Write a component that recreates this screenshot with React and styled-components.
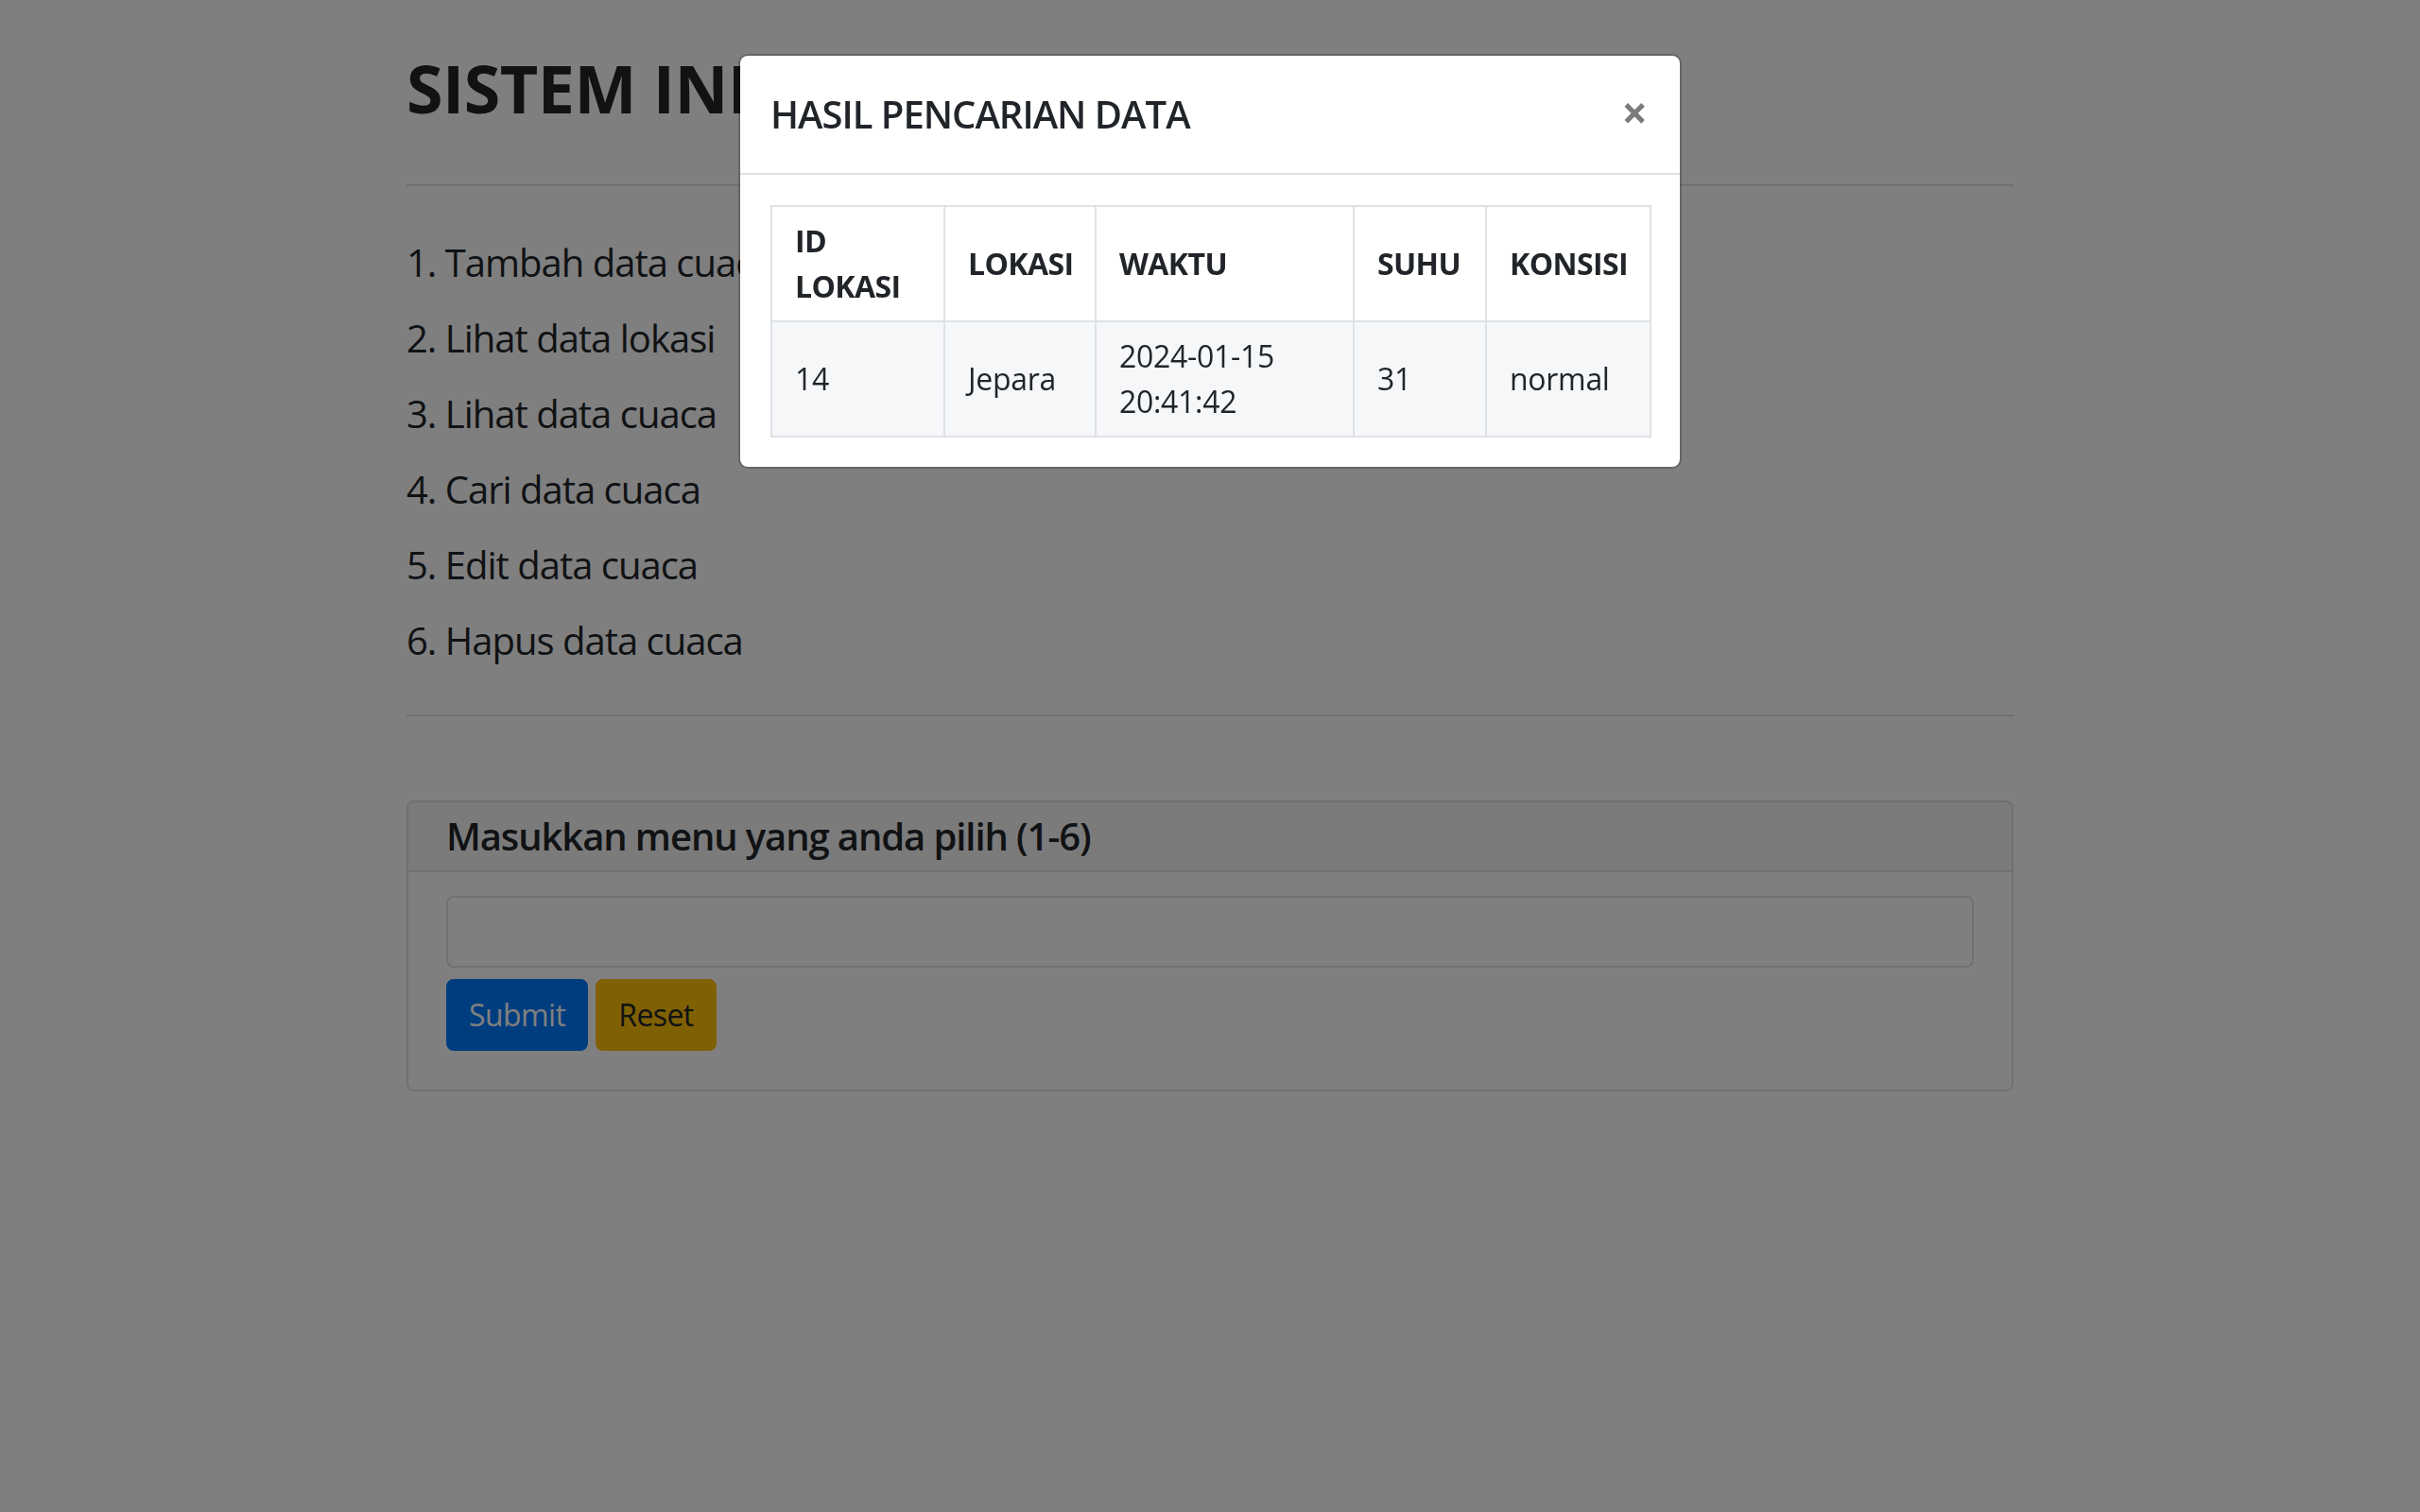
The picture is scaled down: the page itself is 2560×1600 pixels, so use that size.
import React from "react";
import styled, { createGlobalStyle } from "styled-components";

const GlobalStyle = createGlobalStyle`
  html, body {
    margin: 0;
    padding: 0;
    background: #fff;
  }
  body {
    font-family: "Open Sans", "Noto Sans", sans-serif;
    color: #212529;
  }
  * {
    box-sizing: border-box;
  }
`;

const Page = styled.div`
  width: 1700px;
  margin: 0 auto;
  padding-top: 51px;
  min-height: 1600px;
`;

const Title = styled.h1`
  margin: 0;
  font-size: 70px;
  line-height: 84px;
  font-weight: 700;
  letter-spacing: -0.5px;
  white-space: nowrap;
`;

const Rule = styled.hr`
  margin: ${(p) => p.$top}px 0 0;
  border: 0;
  border-top: 2px solid #e2e2e2;
`;

const Menu = styled.div`
  display: flex;
  flex-direction: column;
  gap: 20px;
  margin-top: 51px;
`;

const MenuItem = styled.div`
  font-size: 40px;
  line-height: 60px;
  letter-spacing: -1px;
`;

const Card = styled.div`
  margin-top: 89px;
  border: 2px solid #e0e0e0;
  border-radius: 8px;
  overflow: hidden;
`;

const CardHeader = styled.div`
  padding: 12px 40px;
  background: #f7f7f7;
  border-bottom: 2px solid #e0e0e0;
  font-size: 40px;
  line-height: 48px;
  font-weight: 600;
  letter-spacing: -1.1px;
`;

const CardBody = styled.div`
  padding: 25px 40px 41px;
  display: flex;
  flex-direction: column;
  gap: 12px;
`;

const Input = styled.input`
  display: block;
  width: 100%;
  height: 76px;
  border: 2px solid #dee2e6;
  border-radius: 8px;
  font: inherit;
  font-size: 32px;
  padding: 12px 24px;
  background: #fff;
`;

const Buttons = styled.div`
  display: flex;
  gap: 8px;
`;

const Button = styled.button`
  font-family: inherit;
  font-size: 32px;
  line-height: 48px;
  letter-spacing: -0.6px;
  padding: 12px 22px;
  border: 2px solid ${(p) => (p.$variant === "warning" ? "#ffc107" : "#007bff")};
  background: ${(p) => (p.$variant === "warning" ? "#ffc107" : "#007bff")};
  color: ${(p) => (p.$variant === "warning" ? "#212529" : "#fff")};
  border-radius: 8px;
  cursor: pointer;
`;

const Backdrop = styled.div`
  position: fixed;
  inset: 0;
  background: rgba(0, 0, 0, 0.5);
`;

const ModalLayer = styled.div`
  position: fixed;
  inset: 0;
  display: flex;
  justify-content: center;
  align-items: flex-start;
  padding-top: 57px;
`;

const Modal = styled.div`
  width: 998px;
  background: #fff;
  border: 2px solid rgba(0, 0, 0, 0.2);
  border-radius: 10px;
  background-clip: padding-box;
`;

const ModalHeader = styled.div`
  display: flex;
  align-items: center;
  justify-content: space-between;
  padding: 32px;
  border-bottom: 2px solid #dee2e6;
`;

const ModalTitle = styled.h5`
  margin: 0;
  font-size: 40px;
  line-height: 60px;
  font-weight: 600;
  letter-spacing: -1px;
`;

const Close = styled.button`
  border: 0;
  background: transparent;
  padding: 0 2px 0 0;
  font-family: inherit;
  font-size: 48px;
  line-height: 1;
  font-weight: 700;
  color: #7b7b7b;
  cursor: pointer;
  margin-top: -4px;
`;

const ModalBody = styled.div`
  padding: 32px 32px 31px;
`;

const Table = styled.table`
  width: 100%;
  table-layout: fixed;
  border-collapse: collapse;
  font-size: 32px;
  line-height: 48px;
`;

const Col = styled.col`
  width: ${(p) => p.$w}px;
`;

const Th = styled.th`
  padding: 12px 24px;
  border: 2px solid #dee2e6;
  text-align: left;
  vertical-align: middle;
  font-weight: 700;
  letter-spacing: -0.6px;
`;

const Td = styled.td`
  padding: 12px 24px;
  border: 2px solid #dee2e6;
  vertical-align: middle;
  background: #f6f7f9;
  letter-spacing: -0.3px;
`;

const menu = [
  "1. Tambah data cuaca",
  "2. Lihat data lokasi",
  "3. Lihat data cuaca",
  "4. Cari data cuaca",
  "5. Edit data cuaca",
  "6. Hapus data cuaca",
];

const columns = [
  { label: "ID LOKASI", w: 183 },
  { label: "LOKASI", w: 160 },
  { label: "WAKTU", w: 273 },
  { label: "SUHU", w: 140 },
  { label: "KONSISI", w: 174 },
];

const row = ["14", "Jepara", "2024-01-15 20:41:42", "31", "normal"];

export default function App() {
  return (
    <>
      <GlobalStyle />
      <Page>
        <Title>SISTEM INFORMASI CUACA</Title>
        <Rule $top={60} />
        <Menu>
          {menu.map((m) => (
            <MenuItem key={m}>{m}</MenuItem>
          ))}
        </Menu>
        <Rule $top={48} />
        <Card>
          <CardHeader>Masukkan menu yang anda pilih (1-6)</CardHeader>
          <CardBody>
            <Input type="text" />
            <Buttons>
              <Button>Submit</Button>
              <Button $variant="warning">Reset</Button>
            </Buttons>
          </CardBody>
        </Card>
      </Page>

      <Backdrop />
      <ModalLayer>
        <Modal>
          <ModalHeader>
            <ModalTitle>HASIL PENCARIAN DATA</ModalTitle>
            <Close aria-label="Close">&times;</Close>
          </ModalHeader>
          <ModalBody>
            <Table>
              <colgroup>
                {columns.map((c) => (
                  <Col key={c.label} $w={c.w} />
                ))}
              </colgroup>
              <thead>
                <tr>
                  {columns.map((c) => (
                    <Th key={c.label}>{c.label}</Th>
                  ))}
                </tr>
              </thead>
              <tbody>
                <tr>
                  {row.map((v, i) => (
                    <Td key={i}>{v}</Td>
                  ))}
                </tr>
              </tbody>
            </Table>
          </ModalBody>
        </Modal>
      </ModalLayer>
    </>
  );
}
